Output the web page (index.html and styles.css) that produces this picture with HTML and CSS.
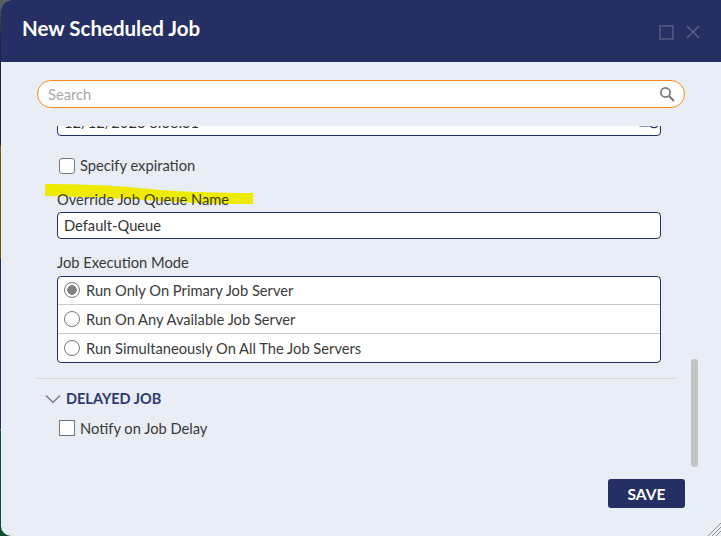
FILE: index.html
```html
<!DOCTYPE html>
<html lang="en">
<head>
<meta charset="utf-8">
<title>New Scheduled Job</title>
<link rel="stylesheet" href="styles.css">
</head>
<body>
<div class="window">
  <header class="titlebar">
    <h1 class="title">New Scheduled Job</h1>
    <div class="controls">
      <svg class="ctl" width="15" height="15" viewBox="0 0 15 15"><rect x="1" y="1" width="13" height="13" fill="none" stroke="#5f6685" stroke-width="1.2"/></svg>
      <svg class="ctl" width="14" height="14" viewBox="0 0 14 14"><path d="M1 1L13 13M13 1L1 13" fill="none" stroke="#5f6685" stroke-width="1.3"/></svg>
    </div>
  </header>
  <div class="content">
    <div class="search">
      <span class="search-text">Search</span>
      <svg width="16" height="16" viewBox="0 0 16 16"><circle cx="6.5" cy="6.5" r="4.6" fill="none" stroke="#777" stroke-width="1.7"/><path d="M10 10L15 15" stroke="#777" stroke-width="2"/></svg>
    </div>
    <div class="scroller">
      <div class="scroll-inner">
        <div class="field date-field">
          <span class="field-text">12/12/2023 8:38:31</span>
          <svg class="date-icon" width="21" height="16" viewBox="0 0 21 16"><path d="M1 2H10V12H1ZM1 6H10M3 8.5H8M3 10.5H8" fill="none" stroke="#252f63" stroke-width="1.1"/><circle cx="15" cy="9" r="4.6" fill="none" stroke="#252f63" stroke-width="1.3"/><path d="M15 6.5V9.3H17.2" fill="none" stroke="#252f63" stroke-width="1"/></svg>
        </div>
        <label class="check check-expire"><span class="box box-round"></span><span class="check-text">Specify expiration</span></label>
        <div class="label label-queue">Override Job Queue Name</div>
        <div class="field queue-field"><span class="field-text">Default-Queue</span></div>
        <div class="label label-mode">Job Execution Mode</div>
        <div class="radios">
          <div class="radio-row"><span class="radio radio-on"></span><span>Run Only On Primary Job Server</span></div>
          <div class="radio-row"><span class="radio"></span><span>Run On Any Available Job Server</span></div>
          <div class="radio-row"><span class="radio"></span><span>Run Simultaneously On All The Job Servers</span></div>
        </div>
        <div class="divider"></div>
        <div class="section">
          <svg width="16" height="10" viewBox="0 0 16 10"><path d="M1 1.5L8 8.5L15 1.5" fill="none" stroke="#7a7d86" stroke-width="1.5"/></svg>
          <span class="section-title">DELAYED JOB</span>
        </div>
        <label class="check check-notify"><span class="box"></span><span>Notify on Job Delay</span></label>
      </div>
    </div>
    <div class="footer"><button class="save">SAVE</button></div>
  </div>
  <div class="scrollbar"></div>
  <svg class="highlight" width="208" height="21" viewBox="0 0 208 21"><path d="M0 0C25 0 45 1 62 1.5C90 3 110 6 130 7C160 8.5 185 9 208 9L208 20C190 20 170 20 150 19C115 17 90 15 60 14C40 13 20 12.5 0 12Z" fill="#eeea00"/></svg>
  <svg class="grip" width="14" height="14" viewBox="0 0 14 14"><path d="M1 14L14 1M5 14L14 5M9 14L14 9" stroke="#8d9097" stroke-width="1"/></svg>
</div>
</body>
</html>
```
FILE: styles.css
```css
* { box-sizing: border-box; }
html, body { margin: 0; height: 100%; }
body {
  width: 721px;
  height: 536px;
  overflow: hidden;
  font-family: "Lato", "Noto Sans", sans-serif;
  background: linear-gradient(to bottom, #5d5f5c 0, #1d2540 40px, #1d2540 145px, #80500f 146px, #80500f 258px, #1d3557 259px, #1d3557 428px, #77787a 430px, #77787a 430px, #0c4f2c 431px, #0c4f2c 536px);
}
.window {
  position: relative;
  margin-left: 1px;
  width: 720px;
  height: 536px;
  background: #e9edf5;
  border-radius: 10px 0 0 10px;
  overflow: hidden;
  display: flex;
  flex-direction: column;
}
.titlebar {
  flex: none;
  height: 62px;
  background: #252f63;
  display: flex;
  align-items: center;
  justify-content: space-between;
  padding: 0 21px 6px 21px;
}
.title {
  margin: 0;
  font-size: 20.5px;
  font-weight: 700;
  color: #fff;
}
.controls { display: flex; align-items: center; gap: 12px; padding-top: 8px; }
.ctl { display: block; }
.content { flex: 1; display: flex; flex-direction: column; min-height: 0; }
.search {
  margin: 18px 36px 0 36px;
  height: 28px;
  flex: none;
  background: #fff;
  border: 1px solid #f58a12;
  border-radius: 14px;
  display: flex;
  align-items: center;
  justify-content: space-between;
  padding: 0 9px 0 10px;
}
.search-text { font-size: 14.7px; color: #a9a9a9; }
.scroller {
  margin-top: 18px;
  height: 345px;
  flex: none;
  overflow: hidden;
  padding-left: 36px;
  padding-right: 44px;
}
.scroll-inner { margin-top: -17px; font-size: 14.7px; color: #3a3a3a; }
.field {
  margin-left: 20px;
  margin-right: 0;
  width: 604px;
  height: 27px;
  background: #fff;
  border: 1px solid #252f63;
  border-radius: 4px;
  display: flex;
  align-items: center;
  justify-content: space-between;
  padding: 0 0 2px 6px;
}
.field-text { font-size: 14.7px; color: #333; }
.check { display: flex; align-items: center; gap: 5px; margin-left: 22px; }
.check-expire { margin-top: 21px; height: 17px; }
.check-text { padding-bottom: 2px; }
.box {
  width: 16px;
  height: 16px;
  background: #fff;
  border: 1px solid #77787c;
  flex: none;
}
.box-round { border-radius: 3px; }
.label { position: relative; z-index: 2; margin-left: 20px; line-height: 17px; }
.label-queue { margin-top: 17px; }
.queue-field { margin-top: 4px; }
.label-mode { margin-top: 15px; }
.radios {
  margin: 5px 0 0 20px;
  width: 604px;
  height: 87px;
  background: #fff;
  border: 1px solid #252f63;
  border-radius: 4px;
  display: flex;
  flex-direction: column;
}
.radio-row {
  flex: 1;
  display: flex;
  align-items: center;
  gap: 6px;
  padding: 0 0 1px 6px;
  border-top: 1px solid #c8c8c8;
}
.radio-row:first-child { flex: none; height: 27px; border-top: 0; }
.radio {
  width: 16px;
  height: 16px;
  border: 1px solid #77787c;
  border-radius: 50%;
  background: #fff;
  flex: none;
}
.radio-on { background: radial-gradient(circle, #808080 0 4.5px, #fff 5px); }
.divider { height: 1px; background: #d5d6da; margin-top: 15px; width: 639px; }
.section { display: flex; align-items: center; gap: 5px; margin: 11px 0 0 8px; height: 17px; }
.section-title { font-size: 14.5px; font-weight: 700; color: #2f3a70; }
.check-notify { margin-top: 12px; height: 17px; }
.footer {
  flex: none;
  padding: 8px 36px 0 0;
  display: flex;
  justify-content: flex-end;
}
.save {
  width: 77px;
  height: 29px;
  border: 0;
  border-radius: 3px;
  background: #252f63;
  color: #fff;
  font: 700 15.5px "Lato", sans-serif;
}
.scrollbar {
  position: absolute;
  left: 690px;
  top: 359px;
  width: 7px;
  height: 108px;
  border-radius: 3px;
  background: #c4c4c4;
}
.highlight { position: absolute; left: 44px; top: 184px; z-index: 1; pointer-events: none; }
.grip { position: absolute; right: 0; bottom: 0; }
```
